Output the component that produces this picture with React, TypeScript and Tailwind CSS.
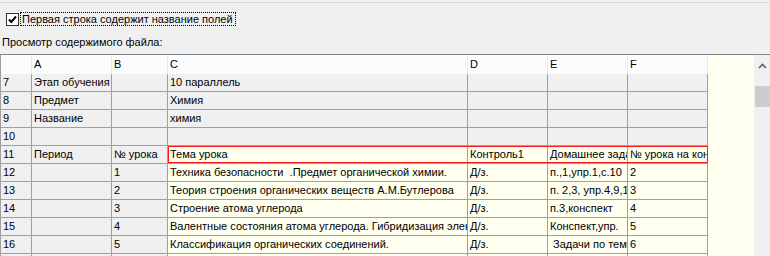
import React from 'react';

const cols = [
  { key: 'n', w: 'w-[32px]' },
  { key: 'A', w: 'w-[80px]' },
  { key: 'B', w: 'w-[56px]' },
  { key: 'C', w: 'w-[300px]' },
  { key: 'D', w: 'w-[80px]' },
  { key: 'E', w: 'w-[80px]' },
  { key: 'F', w: 'w-[80px]' },
];

const rows: string[][] = [
  ['7', 'Этап обучения', '', '10 параллель', '', '', ''],
  ['8', 'Предмет', '', 'Химия', '', '', ''],
  ['9', 'Название', '', 'химия', '', '', ''],
  ['10', '', '', '', '', '', ''],
  ['11', 'Период', '№ урока', 'Тема урока', 'Контроль1', 'Домашнее задание', '№ урока на контроль'],
  ['12', '', '1', 'Техника безопасности  .Предмет органической химии.', 'Д/з.', 'п.,1,упр.1,с.10', '2'],
  ['13', '', '2', 'Теория строения органических веществ А.М.Бутлерова', 'Д/з.', 'п. 2,3, упр.4,9,10', '3'],
  ['14', '', '3', 'Строение атома углерода', 'Д/з.', 'п.3,конспект', '4'],
  ['15', '', '4', 'Валентные состояния атома углерода. Гибридизация электронных орбиталей', 'Д/з.', 'Конспект,упр.', '5'],
  ['16', '', '5', 'Классификация органических соединений.', 'Д/з.', ' Задачи по теме', '6'],
  ['17', '', '6', '', '', '', ''],
];

const App: React.FC = () => {
  return (
    <div
      className="w-[770px] h-[256px] overflow-hidden bg-[#f0f0f0] text-[11px] text-black"
      style={{ fontFamily: '"Liberation Sans", Arial, sans-serif' }}
    >
      <div className="h-px mt-[2px] bg-[#dadada]" />

      {/* Checkbox */}
      <div className="flex items-center h-[14px] mt-[9px] pl-[6px]">
        <div className="w-[13px] h-[13px] border border-[#333] bg-white flex items-center justify-center">
          <svg width="11" height="11" viewBox="0 0 11 11">
            <path d="M2 5.5 L4.3 8 L9 2.5" fill="none" stroke="#000" strokeWidth="2" />
          </svg>
        </div>
        <div className="ml-px h-[14px] border border-dotted border-black pl-px pr-[2px] flex items-center whitespace-nowrap">
          Первая строка содержит название полей
        </div>
      </div>

      <div className="mt-[10px] h-[13px] leading-[13px] pl-[2px] whitespace-nowrap">Просмотр содержимого файла:</div>

      {/* Grid */}
      <div className="mt-[5px] flex border-t border-[#7d848c]">
        <div className="flex-1 relative bg-[#fffff0]">
          {/* header */}
          <div className="flex h-[19px]">
            {cols.map((c, i) => (
              <div
                key={c.key}
                className={`${c.w} shrink-0 h-full bg-[#fbfcfe] border-r border-[#e4eaf2] ${i === 0 ? 'border-l border-l-[#a0a0a0]' : ''} flex items-center pl-[2px]`}
              >
                {i === 0 ? '' : c.key}
              </div>
            ))}
          </div>
          {rows.map((r, ri) => (
            <div key={ri} className="flex h-[18px]">
              {r.map((v, ci) => {
                const gray = ri < 4 || ci < 3;
                return (
                  <div
                    key={ci}
                    className={`${cols[ci].w} shrink-0 h-full overflow-hidden whitespace-pre border-r border-b border-[#a0a0a0] ${ci === 0 ? 'border-l' : ''} ${gray ? 'bg-[#f0f0f0]' : 'bg-[#fffff0]'} flex items-center pl-[2px]`}
                  >
                    {v}
                  </div>
                );
              })}
            </div>
          ))}
          {/* selected header row */}
          <div className="absolute top-[91px] left-[168px] w-[540px] h-[17px] border-[1.5px] border-[#ff1a1a] pointer-events-none" />
        </div>

        {/* Scrollbar */}
        <div className="w-[16px] shrink-0 bg-[#f0f0f0] flex flex-col items-center">
          <svg width="9" height="6" viewBox="0 0 9 6" className="mt-[8px]">
            <path d="M1 5 L4.5 1.5 L8 5" fill="none" stroke="#606060" strokeWidth="1.6" />
          </svg>
          <div className="mt-[17px] w-[15px] h-[21px] bg-[#cdcdcd]" />
          <div className="flex-1" />
          <svg width="9" height="6" viewBox="0 0 9 6" className="mb-[8px]">
            <path d="M1 1 L4.5 4.5 L8 1" fill="none" stroke="#606060" strokeWidth="1.6" />
          </svg>
        </div>
      </div>
    </div>
  );
};

export default App;
